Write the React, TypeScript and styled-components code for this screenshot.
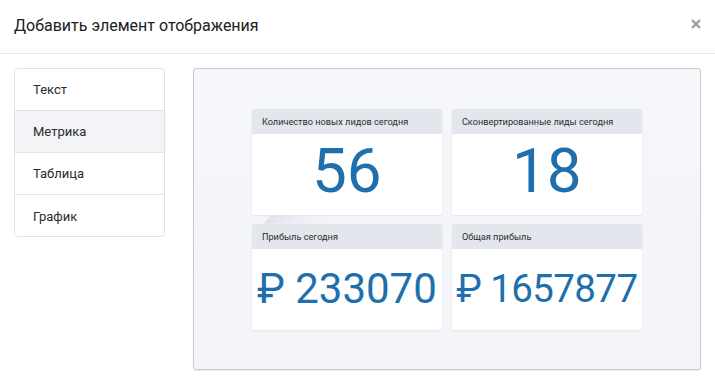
import React from "react";
import styled, { createGlobalStyle } from "styled-components";

const Global = createGlobalStyle`
  html, body { margin: 0; padding: 0; background: #fff; }
  body { font-family: Roboto, "Liberation Sans", sans-serif; }
  * { box-sizing: border-box; }
`;

const Modal = styled.div`
  width: 715px;
  height: 383px;
  background: #fff;
  display: flex;
  flex-direction: column;
`;

const Header = styled.div`
  height: 54px;
  border-bottom: 1px solid #e6e7ea;
  display: flex;
  align-items: center;
  justify-content: space-between;
  padding: 0 14px 0 14px;
`;

const Title = styled.h1`
  margin: 0;
  font-size: 16px;
  font-weight: 400;
  color: #212121;
  line-height: 20px;
  margin-top: -2px;
`;

const Close = styled.button`
  border: 0;
  background: none;
  padding: 0;
  width: 10px;
  height: 10px;
  margin-top: -6px;
  display: flex;
  cursor: pointer;
`;

const Body = styled.div`
  display: flex;
  gap: 28px;
  padding: 14px 14px 0 14px;
`;

const Menu = styled.ul`
  list-style: none;
  margin: 0;
  padding: 0;
  width: 151px;
  height: 169px;
  border: 1px solid #dfe1e5;
  border-radius: 4px;
  overflow: hidden;
`;

const MenuItem = styled.li<{ $active?: boolean }>`
  height: 42px;
  display: flex;
  align-items: center;
  padding-left: 18px;
  font-size: 13px;
  color: #2b2b2b;
  background: ${(p) => (p.$active ? "#f2f4f7" : "#fff")};
  border-bottom: 1px solid #e2e4e8;
  &:last-child { border-bottom: 0; }
`;

const Preview = styled.div`
  width: 509px;
  height: 302px;
  border: 1px solid #c9cacc;
  border-radius: 3px;
  background: linear-gradient(180deg, #f6f7fa 0%, #f3f4f8 100%);
  box-shadow: 0 1px 1px rgba(0, 0, 0, 0.08);
  display: flex;
  align-items: center;
  justify-content: center;
  padding-bottom: 2px;
`;

const Grid = styled.div`
  display: grid;
  grid-template-columns: 190px 190px;
  grid-template-rows: 106px 106px;
  column-gap: 10px;
  row-gap: 9px;
  margin-top: 2px;
`;

const Card = styled.div<{ $curl?: boolean }>`
  position: relative;
  background: #fff;
  border-radius: 2px;
  box-shadow: 0 1px 2px rgba(40, 50, 80, 0.08);
  display: flex;
  flex-direction: column;
  ${(p) =>
    p.$curl
      ? `&::after {
    content: "";
    position: absolute;
    left: 12px;
    top: 106px;
    width: 70px;
    height: 9px;
    background: linear-gradient(90deg, rgba(220,223,232,0.9) 0%, rgba(232,234,240,0.6) 50%, rgba(243,244,248,0) 100%);
    clip-path: polygon(8px 0, 100% 0, 100% 100%, 0 100%);
  }`
      : ""}
`;

const CardHead = styled.div`
  height: 25px;
  background: #e3e6ec;
  border-radius: 2px 2px 0 0;
  display: flex;
  align-items: center;
  padding-left: 10px;
  font-size: 9.2px;
  color: #2e2e2e;
`;

const CardValue = styled.div<{ $size: number; $track?: number }>`
  flex: 1;
  display: flex;
  align-items: center;
  justify-content: center;
  font-size: ${(p) => p.$size}px;
  letter-spacing: ${(p) => p.$track ?? 0}px;
  color: #1e6fab;
  font-weight: 400;
  line-height: 1;
  padding-bottom: ${(p) => (p.$size > 50 ? 6 : 0)}px;
  white-space: nowrap;
`;

const cards = [
  { title: "Количество новых лидов сегодня", value: "56", size: 62, curl: true },
  { title: "Сконвертированные лиды сегодня", value: "18", size: 62 },
  { title: "Прибыль сегодня", value: "₽ 233070", size: 42 },
  { title: "Общая прибыль", value: "₽ 1657877", size: 38.5, track: -0.6 },
];

export default function App() {
  return (
    <>
      <Global />
      <Modal>
        <Header>
          <Title>Добавить элемент отображения</Title>
          <Close aria-label="Закрыть">
            <svg width="10" height="10" viewBox="0 0 10 10">
              <path d="M1 1 L9 9 M9 1 L1 9" stroke="#9b9b9b" strokeWidth="2.2" />
            </svg>
          </Close>
        </Header>
        <Body>
          <Menu>
            <MenuItem>Текст</MenuItem>
            <MenuItem $active>Метрика</MenuItem>
            <MenuItem>Таблица</MenuItem>
            <MenuItem>График</MenuItem>
          </Menu>
          <Preview>
            <Grid>
              {cards.map((c) => (
                <Card key={c.title} $curl={c.curl}>
                  <CardHead>{c.title}</CardHead>
                  <CardValue $size={c.size} $track={c.track}>
                    {c.value}
                  </CardValue>
                </Card>
              ))}
            </Grid>
          </Preview>
        </Body>
      </Modal>
    </>
  );
}
